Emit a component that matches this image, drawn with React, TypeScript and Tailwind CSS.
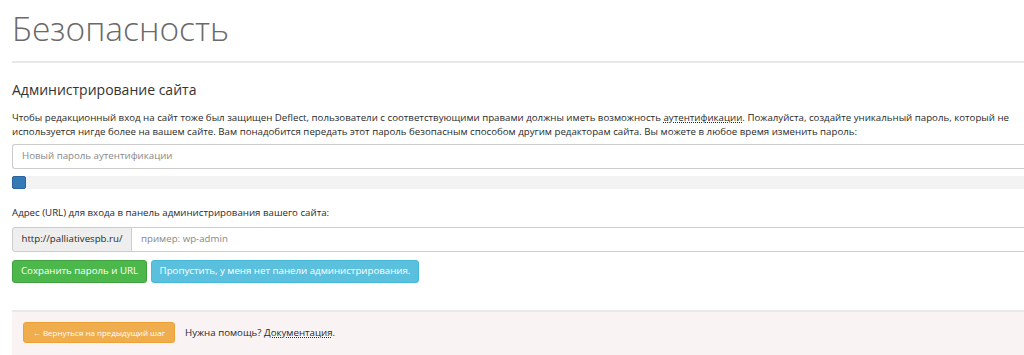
export default function App() {
  return (
    <div
      className="w-[1024px] h-[355px] overflow-hidden bg-white text-[#333]"
      style={{ fontFamily: '"Open Sans", "Liberation Sans", sans-serif' }}
    >
      <div className="pl-3">
        {/* Page title */}
        <h1 className="pt-[8px] pb-[13px] text-[33.5px] leading-[40px] font-light text-[#6a6a6a] border-b-2 border-[#e8e8e8]">
          Безопасность
        </h1>

        <h2 className="mt-[17px] text-[14px] leading-[20px] text-[#333]">Администрирование сайта</h2>

        <p className="mt-[11px] pr-3 text-[9.7px] leading-[14px] text-[#2a2a2a]">
          Чтобы редакционный вход на сайт тоже был защищен Deflect, пользователи с соответствующими правами должны
          иметь возможность <span className="underline decoration-dotted">аутентификации</span>. Пожалуйста, создайте
          уникальный пароль, который не используется нигде более на вашем сайте. Вам понадобится передать этот пароль
          безопасным способом другим редакторам сайта. Вы можете в любое время изменить пароль:
        </p>

        <div className="mt-[5px] h-[25px] flex items-center px-[9px] border border-[#ccc] border-r-0 rounded-l-[3px] text-[9.7px] text-[#888]">
          Новый пароль аутентификации
        </div>

        {/* Strength meter */}
        <div className="mt-[7px] h-[13px] flex items-stretch bg-[#f3f3f3]">
          <div className="w-[14px] bg-[#337ab7] border border-[#2a65a0] rounded-[2px]" />
        </div>

        <div className="mt-[17px] text-[9.7px] leading-[14px] font-medium text-[#2a2a2a]">
          Адрес (URL) для входа в панель администрирования вашего сайта:
        </div>

        <div className="mt-[7px] flex h-[25px] text-[9.7px]">
          <div className="w-[120px] flex items-center justify-center bg-[#eee] border border-[#ccc] rounded-l-[3px] font-medium text-[#2a2a2a]">
            http://palliativespb.ru/
          </div>
          <div className="flex-1 flex items-center px-[9px] border-y border-[#ccc] text-[#888]">пример: wp-admin</div>
        </div>

        <div className="mt-[8px] flex gap-[4px] text-[9.7px] text-white">
          <button className="w-[135px] h-[23px] bg-[#4cb84c] border border-[#3fa23f] rounded-[3px]">
            Сохранить пароль и URL
          </button>
          <button className="w-[268px] h-[23px] bg-[#5bc0de] border border-[#46b8da] rounded-[3px]">
            Пропустить, у меня нет панели администрирования.
          </button>
        </div>

        {/* Footer */}
        <div className="mt-[27px] h-[60px] bg-[#f9f4f3] border-t-2 border-[#e8e8e8] pl-[11px] pt-[10px] flex items-start gap-[10px]">
          <button className="w-[152px] h-[21px] bg-[#f0ad4e] border border-[#eea236] rounded-[3px] text-[8px] text-white">
            ← Вернуться на предыдущий шаг
          </button>
          <span className="text-[9.7px] leading-[21px] text-[#2a2a2a]">
            Нужна помощь? <span className="underline decoration-dotted">Документация</span>.
          </span>
        </div>
      </div>
    </div>
  );
}
